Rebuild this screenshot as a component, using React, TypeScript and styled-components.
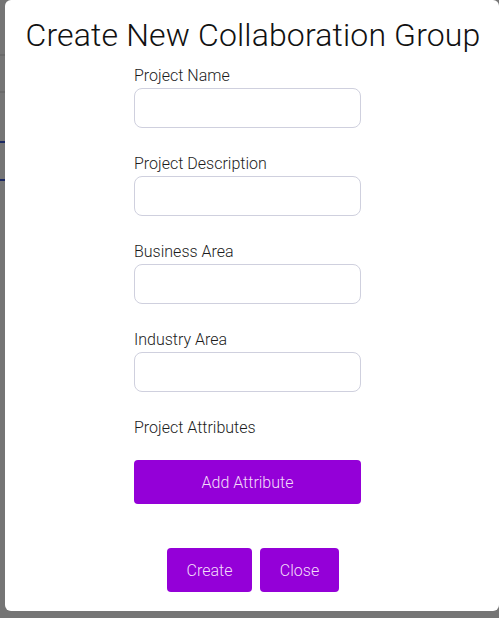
import React from "react";
import styled, { createGlobalStyle } from "styled-components";

const Global = createGlobalStyle`
  html, body { margin: 0; padding: 0; }
  body {
    width: 499px;
    height: 618px;
    overflow: hidden;
    background: #ffffff;
    font-family: "Fira Sans", Roboto, "Noto Sans", sans-serif;
  }
`;

const PageBehind = styled.div`
  display: flex;
  flex-direction: column;
  height: 618px;
`;

const BehindRow = styled.div<{ $h: number; $line: string }>`
  height: ${(p) => p.$h}px;
  border-bottom: 2px solid ${(p) => p.$line};
  box-sizing: border-box;
`;

const Backdrop = styled.div`
  position: fixed;
  inset: 0;
  background: rgba(0, 0, 0, 0.54);
`;

const Modal = styled.div`
  position: fixed;
  left: 5px;
  top: 0;
  width: 494px;
  height: 611px;
  background: #ffffff;
  border-radius: 6px;
  display: flex;
  flex-direction: column;
  align-items: center;
  box-sizing: border-box;
  padding-top: 15px;
`;

const Title = styled.h1`
  margin: 0 0 0 2px;
  font-family: Roboto, "Noto Sans", sans-serif;
  font-weight: 300;
  font-size: 32px;
  line-height: 40px;
  color: #111111;
  letter-spacing: 0.15px;
`;

const Form = styled.form`
  align-self: flex-start;
  margin-left: 129px;
  width: 227px;
  display: flex;
  flex-direction: column;
  margin-top: 9px;
`;

const Field = styled.div`
  display: flex;
  flex-direction: column;
  margin-bottom: 24px;
`;

const Label = styled.label`
  font-family: Roboto, sans-serif;
  font-weight: 300;
  font-size: 16px;
  line-height: 24px;
  color: #1c1c1c;
  margin-bottom: -4px;
  height: 24px;
  padding-bottom: 4px;
`;

const Input = styled.input`
  box-sizing: border-box;
  width: 227px;
  height: 40px;
  border: 1px solid #cfd0de;
  border-radius: 8px;
  background: #fff;
  outline: none;
  font-size: 16px;
  padding: 0 10px;
`;

const SectionLabel = styled.div`
  font-family: Roboto, sans-serif;
  font-weight: 300;
  font-size: 16px;
  line-height: 24px;
  color: #1c1c1c;
  margin-bottom: 20px;
`;

const PurpleButton = styled.button<{ $w?: number }>`
  box-sizing: border-box;
  height: 44px;
  width: ${(p) => (p.$w ? `${p.$w}px` : "100%")};
  border: none;
  border-radius: 4px;
  background: #9400d8;
  color: #f3ddfa;
  font-family: Roboto, sans-serif;
  font-weight: 300;
  font-size: 16px;
  cursor: pointer;
  padding: 0;
`;

const Actions = styled.div`
  display: flex;
  gap: 8px;
  margin-top: 44px;
  margin-left: 2px;
`;

const fields = ["Project Name", "Project Description", "Business Area", "Industry Area"];

export default function App() {
  return (
    <>
      <Global />
      <PageBehind>
        <BehindRow $h={56} $line="#e6e6e6" />
        <BehindRow $h={37} $line="#e6e6e6" />
        <BehindRow $h={50} $line="#3b57d6" />
        <BehindRow $h={38} $line="#3b57d6" />
      </PageBehind>
      <Backdrop />
      <Modal>
        <Title>Create New Collaboration Group</Title>
        <Form onSubmit={(e) => e.preventDefault()}>
          {fields.map((f) => (
            <Field key={f}>
              <Label>{f}</Label>
              <Input type="text" />
            </Field>
          ))}
          <SectionLabel>Project Attributes</SectionLabel>
          <PurpleButton type="button">Add Attribute</PurpleButton>
        </Form>
        <Actions>
          <PurpleButton type="button" $w={85}>Create</PurpleButton>
          <PurpleButton type="button" $w={79}>Close</PurpleButton>
        </Actions>
      </Modal>
    </>
  );
}
